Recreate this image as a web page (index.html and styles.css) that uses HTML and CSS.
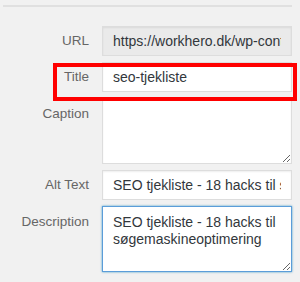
FILE: index.html
```html
<!DOCTYPE html>
<html lang="en">
<head>
    <meta charset="UTF-8">
    <meta name="viewport" content="width=device-width, initial-scale=1.0">
    <title>Attachment Details</title>
    <link rel="stylesheet" href="styles.css">
</head>
<body>
    <div class="panel">
        <div class="rule"></div>
        <div class="fields">
            <label class="field-label" for="url">URL</label>
            <input type="text" id="url" class="field-input readonly" value="https://workhero.dk/wp-content/uploads/seo-tjekliste.png" readonly>

            <label class="field-label" for="title">Title</label>
            <input type="text" id="title" class="field-input" value="seo-tjekliste">

            <label class="field-label top" for="caption">Caption</label>
            <textarea id="caption" class="field-area"></textarea>

            <label class="field-label" for="alt">Alt Text</label>
            <input type="text" id="alt" class="field-input" value="SEO tjekliste - 18 hacks til søgemaskineoptimering">

            <label class="field-label top" for="description">Description</label>
            <textarea id="description" class="field-area focused">SEO tjekliste - 18 hacks til søgemaskineoptimering</textarea>
        </div>
        <div class="highlight"></div>
    </div>
</body>
</html>
```

FILE: styles.css
```css
body {
    margin: 0;
    background-color: #f1f1f1;
    font-family: "Liberation Sans", Arial, sans-serif;
    font-size: 13.5px;
}
.panel {
    position: relative;
    width: 300px;
    height: 282px;
}
.rule {
    height: 2px;
    margin: 5px 8px 0 3px;
    background-color: #e0e0e0;
}
.fields {
    display: grid;
    grid-template-columns: 89px 190px;
    column-gap: 13px;
    row-gap: 6px;
    margin-top: 19px;
}
.field-label {
    color: #666;
    text-align: right;
    line-height: 30px;
}
.field-label.top {
    line-height: 17px;
    padding-top: 7px;
}
.field-input,
.field-area {
    box-sizing: border-box;
    width: 190px;
    margin: 0;
    border: 1px solid #ddd;
    background-color: #fff;
    color: #32373c;
    font-family: inherit;
    font-size: 14px;
    box-shadow: inset 0 1px 2px rgba(0, 0, 0, 0.07);
    outline: none;
}
.field-input {
    height: 30px;
    padding: 0 10px;
}
.field-input.readonly {
    background-color: #eaeaea;
}
.field-area {
    height: 66px;
    padding: 7px 10px;
    line-height: 17px;
    resize: vertical;
}
.field-area.focused {
    border-color: #5b9dd9;
    box-shadow: 0 0 2px rgba(30, 140, 190, 0.8);
}
.highlight {
    position: absolute;
    left: 53px;
    top: 58px;
    width: 244px;
    height: 38px;
    box-sizing: border-box;
    border: 4px solid #f00;
}
```
